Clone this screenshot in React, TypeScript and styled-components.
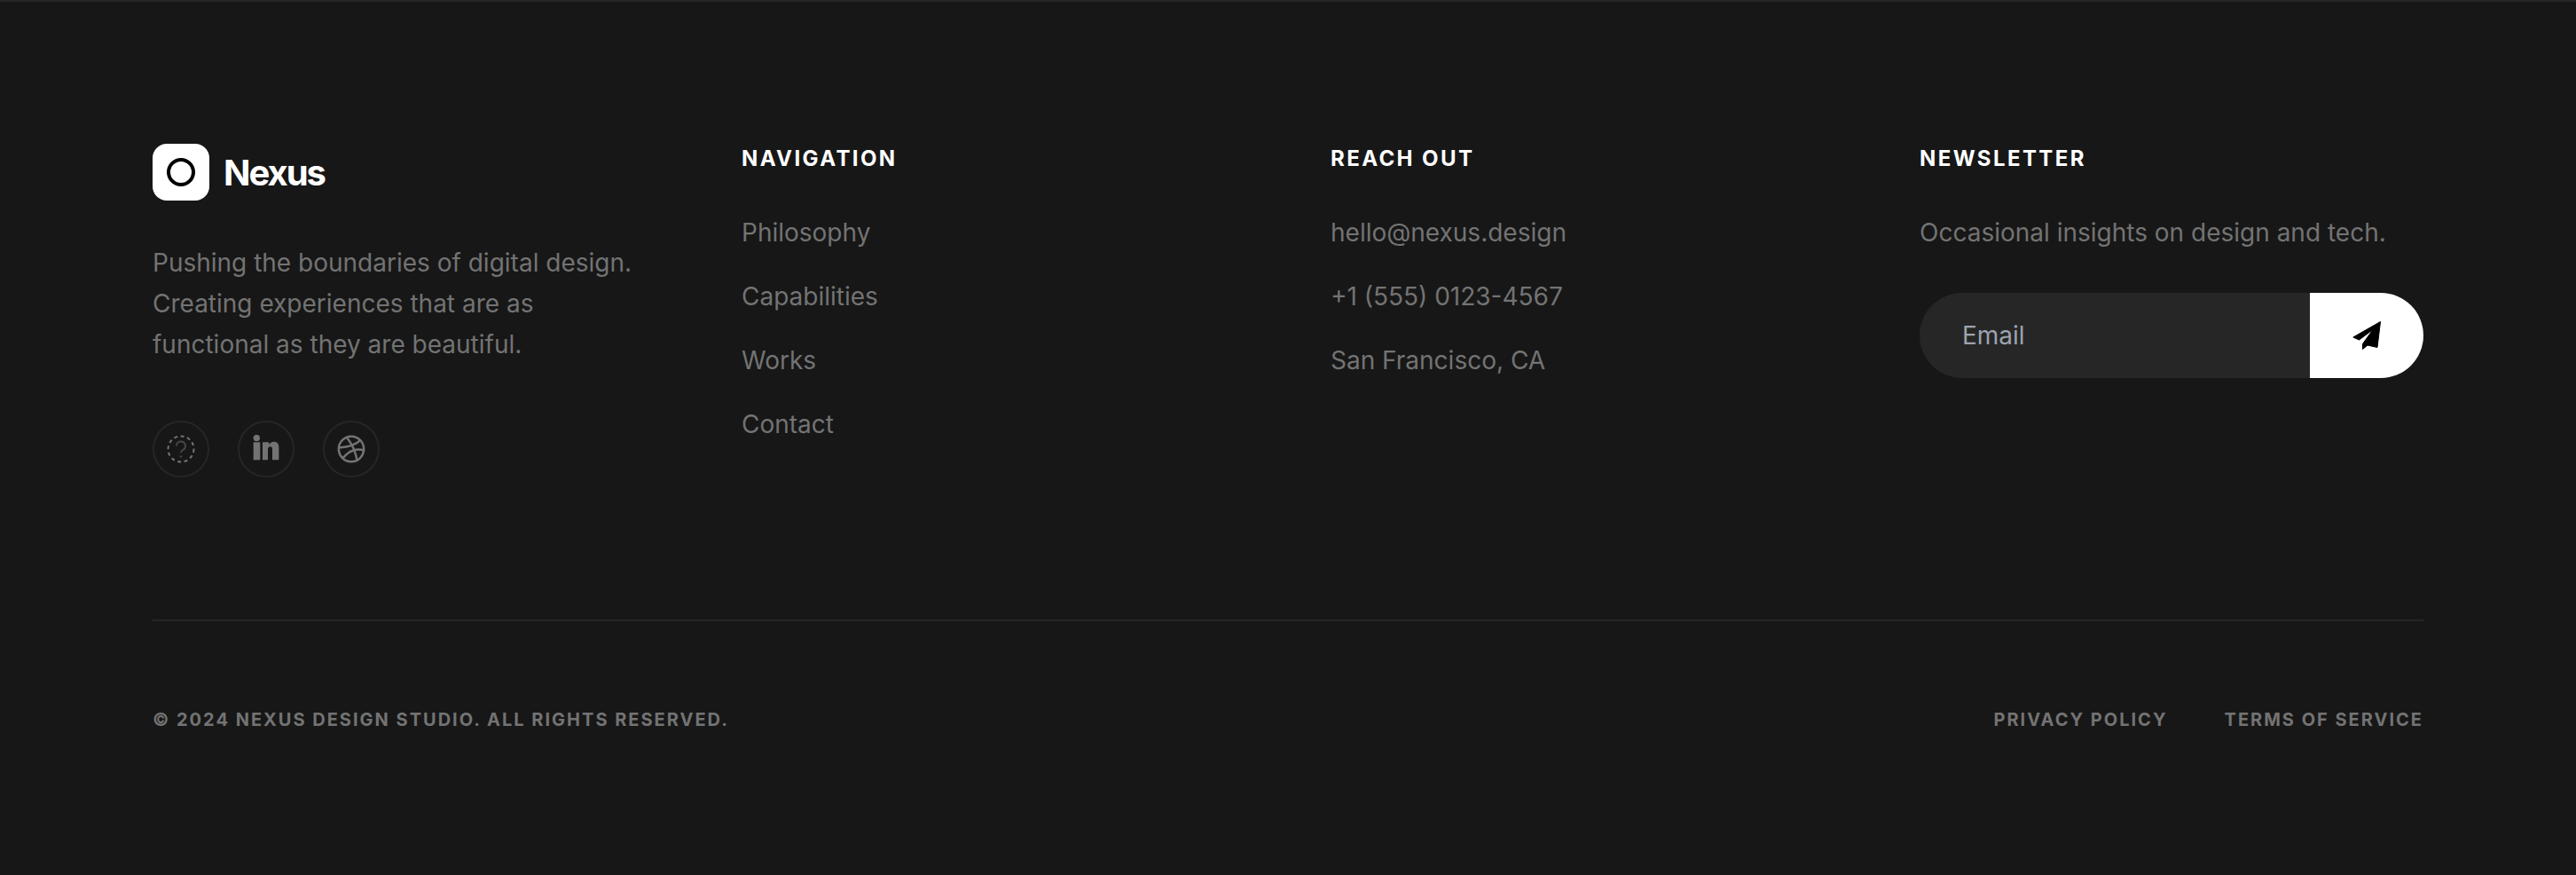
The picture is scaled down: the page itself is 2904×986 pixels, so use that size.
import styled, { createGlobalStyle } from 'styled-components';
import { Dribbble } from 'lucide-react';

const GlobalStyle = createGlobalStyle`
  *,
  *::after {
    box-sizing: border-box;
  }
  body {
    margin: 0;
    background: #171717;
    font-family: Inter, "Liberation Sans", sans-serif;
  }
`;

const Footer = styled.footer`
  height: 986px;
  background: #171717;
  border-top: 2px solid #262626;
  padding: 160px 172px 0;
`;

const Columns = styled.div`
  display: grid;
  grid-template-columns: repeat(4, minmax(0, 1fr));
  gap: 96px;
  border-bottom: 2px solid #262626;
  height: 538px;
`;

const Brand = styled.div`
  display: flex;
  align-items: center;
  gap: 16px;
  margin-bottom: 47px;
`;

const LogoMark = styled.div`
  width: 64px;
  height: 64px;
  border-radius: 16px;
  background: #fff;
  display: flex;
  align-items: center;
  justify-content: center;

  &::after {
    content: '';
    width: 32px;
    height: 32px;
    border: 4px solid #000;
    border-radius: 50%;
  }
`;

const LogoText = styled.span`
  color: #fff;
  font-size: 40px;
  font-weight: 700;
  letter-spacing: -0.05em;
`;

const Blurb = styled.p`
  margin: 0 0 63px;
  color: #737373;
  font-size: 28px;
  line-height: 46px;
`;

const Socials = styled.div`
  display: flex;
  gap: 32px;
`;

const Social = styled.a`
  width: 64px;
  height: 64px;
  border: 2px solid #262626;
  border-radius: 50%;
  display: flex;
  align-items: center;
  justify-content: center;
  color: #737373;
`;

const Heading = styled.h4`
  margin: 0 0 46px;
  color: #fff;
  font-size: 24px;
  line-height: 34px;
  font-weight: 700;
  letter-spacing: 0.1em;
  text-transform: uppercase;
`;

const List = styled.ul`
  list-style: none;
  margin: 0;
  padding: 0;
  display: flex;
  flex-direction: column;
  gap: 32px;
`;

const Item = styled.li`
  color: #737373;
  font-size: 28px;
  line-height: 40px;
`;

const Note = styled.p`
  margin: 0 0 48px;
  color: #737373;
  font-size: 28px;
  line-height: 40px;
`;

const Subscribe = styled.form`
  display: flex;
  height: 96px;
`;

const EmailInput = styled.input`
  flex: 1;
  min-width: 0;
  height: 96px;
  border: 0;
  outline: 0;
  padding: 0 48px;
  background: #262626;
  border-radius: 48px 0 0 48px;
  color: #fff;
  font-family: inherit;
  font-size: 28px;

  &::placeholder {
    color: #9ca3af;
  }
`;

const SendButton = styled.button`
  width: 128px;
  height: 96px;
  border: 0;
  padding: 0;
  background: #fff;
  color: #000;
  border-radius: 0 48px 48px 0;
  display: flex;
  align-items: center;
  justify-content: center;
`;

const Bottom = styled.div`
  display: flex;
  justify-content: space-between;
  align-items: center;
  padding-top: 97px;
`;

const Fine = styled.span`
  color: #737373;
  font-size: 20px;
  line-height: 28px;
  font-weight: 700;
  letter-spacing: 0.1em;
  text-transform: uppercase;
`;

const Legal = styled.div`
  display: flex;
  gap: 64px;
`;

const PlaceholderIcon = () => (
  <svg width="32" height="32" viewBox="0 0 32 32" fill="none" stroke="currentColor">
    <circle cx="16" cy="16" r="14.5" strokeWidth="2" strokeDasharray="4 3.500" />
    <path d="M11 12.500a5 5 0 1 1 7.500 4.300c-1.600.9-2.500 1.800-2.500 3.500" strokeWidth="2" opacity="0.5" />
    <circle cx="16" cy="24.500" r="1.300" fill="currentColor" stroke="none" opacity="0.5" />
  </svg>
);

const LinkedinIcon = () => (
  <svg width="32" height="32" viewBox="0 0 32 32" fill="currentColor">
    <circle cx="5.300" cy="3.600" r="3.700" />
    <path d="M1.700 8.300h7.600v20H1.700z" />
    <path d="M12 8.300h7.200v2.800c1.200-2 3.300-3.300 5.600-3.300 4.300 0 5.600 3 5.600 7v13.500h-7.400V16.500c0-1.900-.5-3.200-2.200-3.200-2 0-2.800 1.500-2.800 3.400v11.600h-6z" />
  </svg>
);

const PlaneIcon = () => (
  <svg width="34" height="34" viewBox="-1 -1 34 34" fill="currentColor" stroke="currentColor" strokeWidth="1" strokeLinejoin="round">
    <path d="M31.500.500.800 18 7.500 21 23 9.500 11.500 25.500 11.500 31.500 17 27 28 29.500Z" />
  </svg>
);

export default function App() {
  return (
    <>
      <GlobalStyle />
      <Footer>
        <Columns>
          <div>
            <Brand>
              <LogoMark />
              <LogoText>Nexus</LogoText>
            </Brand>
            <Blurb>
              Pushing the boundaries of digital design. Creating experiences that are as functional as they are beautiful.
            </Blurb>
            <Socials>
              <Social>
                <PlaceholderIcon />
              </Social>
              <Social>
                <LinkedinIcon />
              </Social>
              <Social>
                <Dribbble size={34} strokeWidth={1.75} />
              </Social>
            </Socials>
          </div>
          <div>
            <Heading>Navigation</Heading>
            <List>
              <Item>Philosophy</Item>
              <Item>Capabilities</Item>
              <Item>Works</Item>
              <Item>Contact</Item>
            </List>
          </div>
          <div>
            <Heading>Reach Out</Heading>
            <List>
              <Item>hello@nexus.design</Item>
              <Item>+1 (555) 0123-4567</Item>
              <Item>San Francisco, CA</Item>
            </List>
          </div>
          <div>
            <Heading>Newsletter</Heading>
            <Note>Occasional insights on design and tech.</Note>
            <Subscribe onSubmit={(e) => e.preventDefault()}>
              <EmailInput type="email" placeholder="Email" />
              <SendButton type="submit" aria-label="Subscribe">
                <PlaneIcon />
              </SendButton>
            </Subscribe>
          </div>
        </Columns>
        <Bottom>
          <Fine>© 2024 Nexus Design Studio. All rights reserved.</Fine>
          <Legal>
            <Fine>Privacy Policy</Fine>
            <Fine>Terms of Service</Fine>
          </Legal>
        </Bottom>
      </Footer>
    </>
  );
}
